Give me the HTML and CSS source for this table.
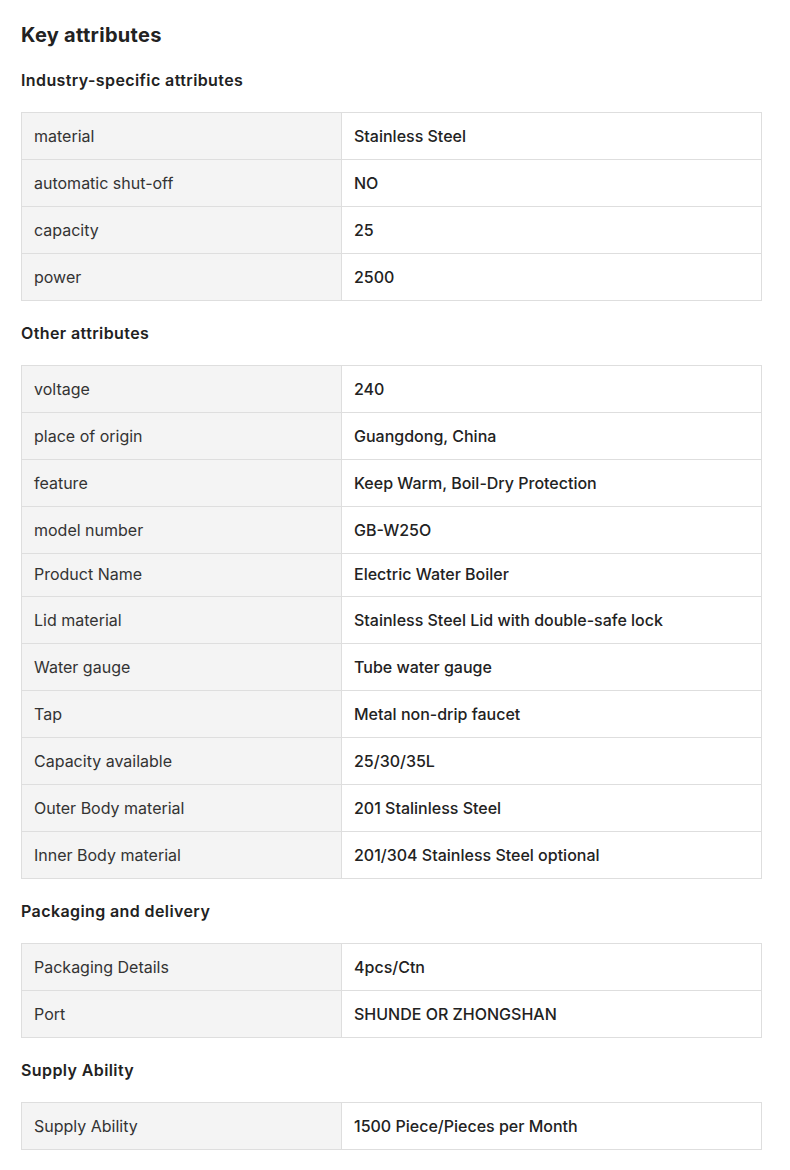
FILE: index.html
```html
<!DOCTYPE html>
<html lang="en">
<head>
<meta charset="utf-8">
<title>Key attributes</title>
<link rel="stylesheet" href="styles.css">
</head>
<body>
<div class="page">
  <h2 class="title">Key attributes</h2>

  <h3 class="section-title">Industry-specific attributes</h3>
  <table class="attrs">
    <tr><td class="label">material</td><td class="value">Stainless Steel</td></tr>
    <tr><td class="label">automatic shut-off</td><td class="value">NO</td></tr>
    <tr><td class="label">capacity</td><td class="value">25</td></tr>
    <tr><td class="label">power</td><td class="value">2500</td></tr>
  </table>

  <h3 class="section-title">Other attributes</h3>
  <table class="attrs">
    <tr><td class="label">voltage</td><td class="value">240</td></tr>
    <tr><td class="label">place of origin</td><td class="value">Guangdong, China</td></tr>
    <tr><td class="label">feature</td><td class="value">Keep Warm, Boil-Dry Protection</td></tr>
    <tr><td class="label">model number</td><td class="value">GB-W25O</td></tr>
    <tr class="short"><td class="label">Product Name</td><td class="value">Electric Water Boiler</td></tr>
    <tr><td class="label">Lid material</td><td class="value">Stainless Steel Lid with double-safe lock</td></tr>
    <tr><td class="label">Water gauge</td><td class="value">Tube water gauge</td></tr>
    <tr><td class="label">Tap</td><td class="value">Metal non-drip faucet</td></tr>
    <tr><td class="label">Capacity available</td><td class="value">25/30/35L</td></tr>
    <tr><td class="label">Outer Body material</td><td class="value">201 Stalinless Steel</td></tr>
    <tr><td class="label">Inner Body material</td><td class="value">201/304 Stainless Steel optional</td></tr>
  </table>

  <h3 class="section-title">Packaging and delivery</h3>
  <table class="attrs">
    <tr><td class="label">Packaging Details</td><td class="value">4pcs/Ctn</td></tr>
    <tr><td class="label">Port</td><td class="value">SHUNDE OR ZHONGSHAN</td></tr>
  </table>

  <h3 class="section-title">Supply Ability</h3>
  <table class="attrs">
    <tr><td class="label">Supply Ability</td><td class="value">1500 Piece/Pieces per Month</td></tr>
  </table>
</div>
</body>
</html>
```

FILE: styles.css
```css
html, body {
  margin: 0;
  padding: 0;
  background: #ffffff;
}

body {
  font-family: Inter, "Noto Sans", "Liberation Sans", sans-serif;
  color: #222222;
}

.page {
  padding: 21px 29px 20px 21px;
}

.title {
  margin: 0;
  font-size: 20px;
  line-height: 28px;
  font-weight: 700;
  letter-spacing: 0.3px;
  color: #222222;
}

.section-title {
  margin: 19px 0 20px;
  font-size: 16px;
  line-height: 24px;
  font-weight: 600;
  letter-spacing: 0.4px;
  color: #222222;
}

.attrs {
  width: 741px;
  border-collapse: collapse;
  table-layout: fixed;
  margin-bottom: 20px;
}

.attrs + .section-title {
  margin-top: 0;
}

.attrs td {
  border: 1px solid #dedede;
  padding: 12px 12px;
  height: 22px;
  font-size: 16px;
  line-height: 22px;
  vertical-align: middle;
}

.attrs .label {
  width: 295px;
  background: #f4f4f4;
  color: #333333;
  font-weight: 400;
}

.attrs .value {
  background: #ffffff;
  color: #222222;
  font-weight: 500;
}

.attrs tr.short td {
  padding-top: 9px;
  padding-bottom: 11px;
}
```
